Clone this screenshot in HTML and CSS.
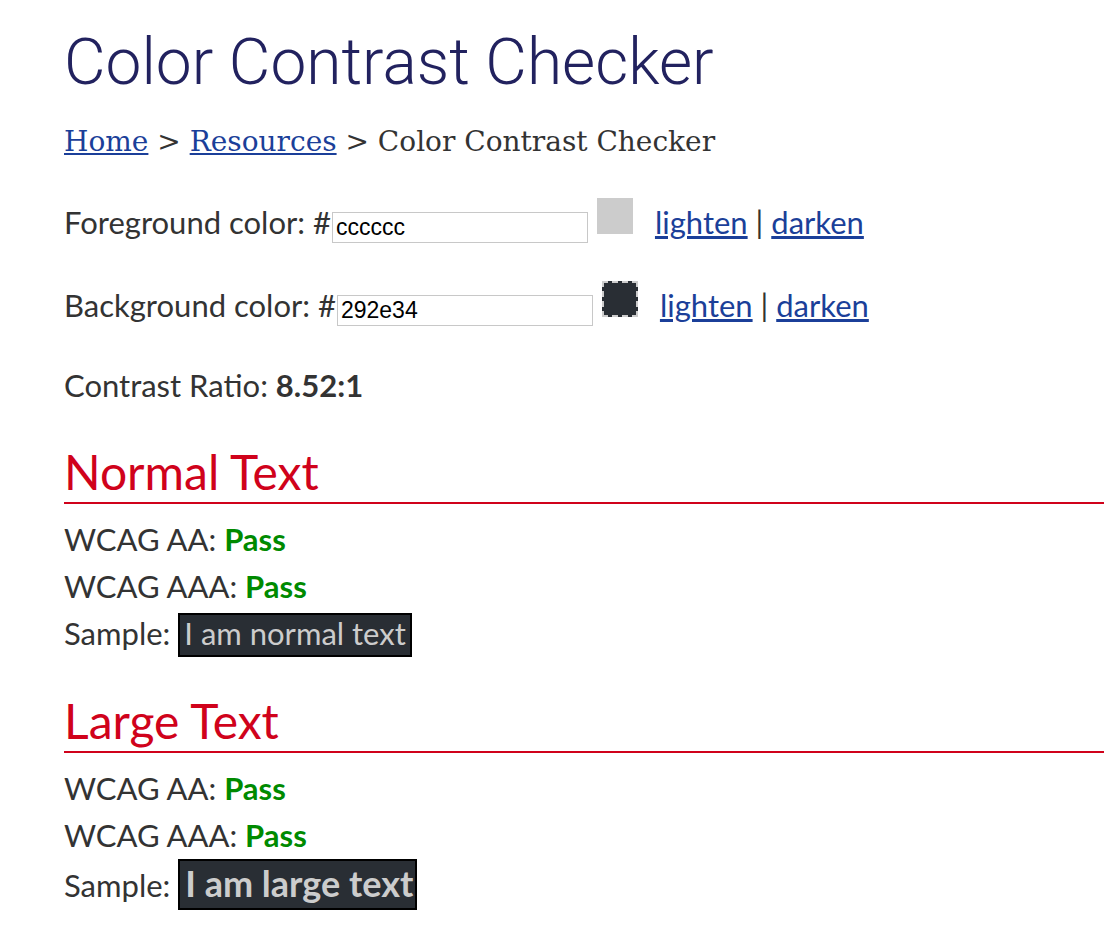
FILE: index.html
```html
<!DOCTYPE html>
<html lang="en">
<head>
<meta charset="utf-8">
<title>Color Contrast Checker</title>
<link rel="stylesheet" href="styles.css">
</head>
<body>
<main class="page">
  <h1 class="title">Color Contrast Checker</h1>
  <nav class="crumbs"><a href="#">Home</a> &gt; <a href="#">Resources</a> &gt; Color Contrast Checker</nav>

  <p class="field field-fg">Foreground color: #<input class="hex" type="text" value="cccccc"><span class="swatch swatch-fg"></span><a href="#">lighten</a> | <a href="#">darken</a></p>
  <p class="field field-bg">Background color: #<input class="hex" type="text" value="292e34"><span class="swatch swatch-bg"></span><a href="#">lighten</a> | <a href="#">darken</a></p>

  <p class="ratio">Contrast Ratio: <strong>8.52:1</strong></p>

  <section class="block">
    <h2 class="heading">Normal Text</h2>
    <p class="line line-first">WCAG AA: <strong class="pass">Pass</strong></p>
    <p class="line">WCAG AAA: <strong class="pass">Pass</strong></p>
    <p class="line">Sample: <span class="sample">I am normal text</span></p>
  </section>

  <section class="block">
    <h2 class="heading">Large Text</h2>
    <p class="line line-first">WCAG AA: <strong class="pass">Pass</strong></p>
    <p class="line">WCAG AAA: <strong class="pass">Pass</strong></p>
    <p class="line">Sample: <span class="sample sample-large">I am large text</span></p>
  </section>
</main>
</body>
</html>
```

FILE: styles.css
```css
html, body {
  margin: 0;
  padding: 0;
  background: #fff;
}

body {
  font-family: "Lato", "Open Sans", sans-serif;
  font-size: 31px;
  color: #333;
  overflow: hidden;
}

.page {
  padding: 25px 0 0 64px;
}

.title {
  margin: 0;
  font-family: "Roboto", sans-serif;
  font-weight: 300;
  font-size: 64px;
  line-height: 76px;
  color: #22225f;
}

.crumbs {
  margin-top: 21px;
  font-family: "DejaVu Serif", serif;
  font-size: 28px;
  line-height: 40px;
  color: #333;
}

a {
  color: #1b3f99;
  text-decoration: underline;
}

.field {
  margin: 36px 0 0;
  line-height: 46px;
}

.field-fg {
  margin-top: 36px;
}

.hex {
  box-sizing: border-box;
  width: 256px;
  height: 31px;
  margin: 0 0 0 1px;
  padding: 1px 3px 0;
  border: 1px solid #c8c8c8;
  font-family: "Liberation Sans", Arial, sans-serif;
  font-size: 23px;
  color: #000;
  vertical-align: -1px;
}

.swatch {
  display: inline-block;
  box-sizing: border-box;
  width: 36px;
  height: 36px;
  margin: 0 22px 0 9px;
}

.swatch-fg {
  background: #cccccc;
}

.swatch-bg {
  background: #292e34;
  border: 2px dashed #cccccc;
}

.ratio {
  margin: 34px 0 0;
  line-height: 46px;
}

.block {
  margin-top: 36px;
}

.heading {
  margin: 0;
  padding-bottom: 3px;
  font-family: "Lato", sans-serif;
  font-weight: 400;
  font-size: 48px;
  line-height: 55px;
  color: #d0021b;
  border-bottom: 2px solid #d0021b;
}

.line {
  margin: 0;
  line-height: 47px;
}

.line-first {
  margin-top: 12px;
}

.pass {
  color: #008a00;
}

.sample {
  display: inline-block;
  line-height: 36px;
  padding: 0 4px 4px;
  background: #292e34;
  color: #cccccc;
  border: 2px solid #000;
}

.sample-large {
  font-weight: 700;
  font-size: 36px;
  line-height: 45px;
  padding: 0 2px 2px 5px;
}
```
